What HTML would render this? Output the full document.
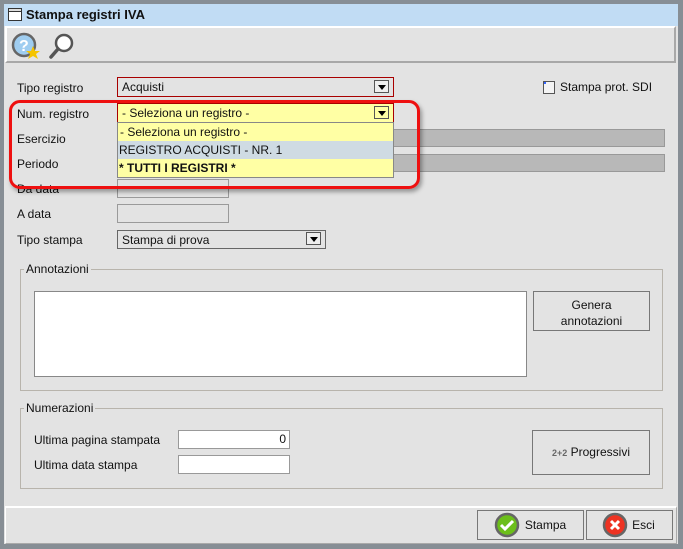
<!DOCTYPE html>
<html><head><meta charset="utf-8"><style>
*{box-sizing:border-box;margin:0;padding:0}
body{width:683px;height:549px;background:#878e95;position:relative;overflow:hidden;font-family:"Liberation Sans",Arial,sans-serif;font-size:12px;color:#111}
.a{position:absolute}
.win{left:4px;top:4px;width:674px;height:540px;background:#e3e3e3}
.title{left:4px;top:4px;width:674px;height:22px;background:#c1dcf4;font-weight:bold;font-size:13px;line-height:22px;padding-left:22px}
.tb{left:5px;top:26px;width:671px;height:37px;border:2px solid #a8a8a8;border-top-color:#fff;border-left-color:#fff;background:#e3e3e3}
.lbl{left:17px;font-size:12px}
.box{border:1px solid #9a9a9a;background:#e3e3e3}
.combo{border:1px solid #a80000;background:#e3e3e3;padding-left:4px;line-height:18px}
.arr{position:absolute;right:4px;top:2px;width:15px;height:13px;border:1px solid #555;background:#eee}
.arr:after{content:"";position:absolute;left:3px;top:4px;border-left:4px solid transparent;border-right:4px solid transparent;border-top:5px solid #000}
.fs{border:1px solid #b8b4ac}
.leg{background:#e3e3e3;padding:0 2px;font-size:12px}
.btn{border:1px solid #777;background:#e3e3e3;text-align:center}
</style></head><body>
<div class="a win"></div>
<div class="a title">Stampa registri IVA</div>
<div class="a" style="left:8px;top:8px;width:14px;height:13px;border:1px solid #333;background:#fff"><div style="height:3px;border-bottom:1px solid #333;background:#ddd"></div></div>
<div class="a tb"></div>
<svg class="a" style="left:11px;top:32px" width="30" height="28"><circle cx="13" cy="13" r="11" fill="#9fcdf0" stroke="#666" stroke-width="2.5"/><text x="8" y="19" font-size="16" font-family="Liberation Sans" fill="#fff" font-weight="bold">?</text><polygon points="22,14 24,19 29,19 25,22 27,27 22,24 17,27 19,22 15,19 20,19" fill="#f5c400"/></svg>
<svg class="a" style="left:48px;top:32px" width="28" height="28"><circle cx="16" cy="11" r="8" fill="#fff" stroke="#555" stroke-width="2.5"/><line x1="10" y1="17" x2="3" y2="25" stroke="#555" stroke-width="3.5" stroke-linecap="round"/></svg>

<div class="a lbl" style="top:81px">Tipo registro</div>
<div class="a combo" style="left:117px;top:77px;width:277px;height:20px">Acquisti<div class="arr"></div></div>
<div class="a" style="left:543px;top:81px;width:12px;height:13px;border:1px solid #555;background:#f4f4f4"></div>
<div class="a" style="left:544px;top:82px;width:2px;height:2px;background:#36f"></div>
<div class="a" style="left:560px;top:80px">Stampa prot. SDI</div>

<div class="a lbl" style="top:107px">Num. registro</div>
<div class="a combo" style="left:117px;top:103px;width:277px;height:20px;background:#ffffa4">- Seleziona un registro -<div class="arr" style="background:#ffffa4"></div></div>
<div class="a" style="left:117px;top:122px;width:277px;height:56px;border:1px solid #888;background:#ffffa4">
<div style="height:18px;line-height:18px;padding-left:2px">- Seleziona un registro -</div>
<div style="height:18px;line-height:18px;padding-left:1px;background:#cfdbe3">REGISTRO ACQUISTI - NR. 1</div>
<div style="height:18px;line-height:18px;padding-left:1px;font-weight:bold">* TUTTI I REGISTRI *</div>
</div>
<div class="a lbl" style="top:132px">Esercizio</div>
<div class="a" style="left:394px;top:129px;width:271px;height:18px;border:1px solid #999;border-left:none;background:#b8b8b8"></div>
<div class="a lbl" style="top:157px">Periodo</div>
<div class="a" style="left:394px;top:154px;width:271px;height:18px;border:1px solid #999;border-left:none;background:#b8b8b8"></div>
<div class="a lbl" style="top:182px">Da data</div>
<div class="a box" style="left:117px;top:179px;width:112px;height:19px"></div>
<div class="a lbl" style="top:207px">A data</div>
<div class="a box" style="left:117px;top:204px;width:112px;height:19px"></div>
<div class="a lbl" style="top:233px">Tipo stampa</div>
<div class="a combo" style="left:117px;top:230px;width:209px;height:19px;border-color:#666">Stampa di prova<div class="arr" style="top:1px"></div></div>

<div class="a" style="left:9px;top:100px;width:411px;height:89px;border:3px solid #ee1010;border-radius:11px;box-shadow:2px 3px 4px rgba(0,0,0,.35)"></div>

<div class="a fs" style="left:20px;top:269px;width:643px;height:122px"></div>
<div class="a leg" style="left:24px;top:262px">Annotazioni</div>
<div class="a" style="left:34px;top:291px;width:493px;height:86px;border:1px solid #888;background:#fff"></div>
<div class="a btn" style="left:533px;top:291px;width:117px;height:40px;padding-top:5px;line-height:16px">Genera<br>annotazioni</div>

<div class="a fs" style="left:20px;top:408px;width:643px;height:81px"></div>
<div class="a leg" style="left:24px;top:401px">Numerazioni</div>
<div class="a" style="left:34px;top:433px">Ultima pagina stampata</div>
<div class="a" style="left:178px;top:430px;width:112px;height:19px;border:1px solid #999;background:#fff;text-align:right;padding-right:3px;line-height:17px">0</div>
<div class="a" style="left:34px;top:458px">Ultima data stampa</div>
<div class="a" style="left:178px;top:455px;width:112px;height:19px;border:1px solid #999;background:#fff"></div>
<div class="a btn" style="left:532px;top:430px;width:118px;height:45px;line-height:43px"><span style="font-size:9px;color:#666;font-weight:bold">2+2</span> Progressivi</div>

<div class="a" style="left:5px;top:506px;width:672px;height:38px;border:1px solid #aaa;border-top:2px solid #fff;border-left-color:#fff"></div>
<div class="a btn" style="left:477px;top:510px;width:107px;height:30px;line-height:28px;padding-left:30px">Stampa</div>
<svg class="a" style="left:494px;top:512px" width="26" height="26"><circle cx="13" cy="13" r="11" fill="#6cbf1a" stroke="#666" stroke-width="2.5"/><path d="M7 13l4 4 8-8" stroke="#fff" stroke-width="3" fill="none"/></svg>
<div class="a btn" style="left:586px;top:510px;width:87px;height:30px;line-height:28px;padding-left:28px">Esci</div>
<svg class="a" style="left:602px;top:512px" width="26" height="26"><circle cx="13" cy="13" r="11" fill="#ee3322" stroke="#666" stroke-width="2.5"/><path d="M9 9l8 8M17 9l-8 8" stroke="#fff" stroke-width="3"/></svg>
</body></html>
